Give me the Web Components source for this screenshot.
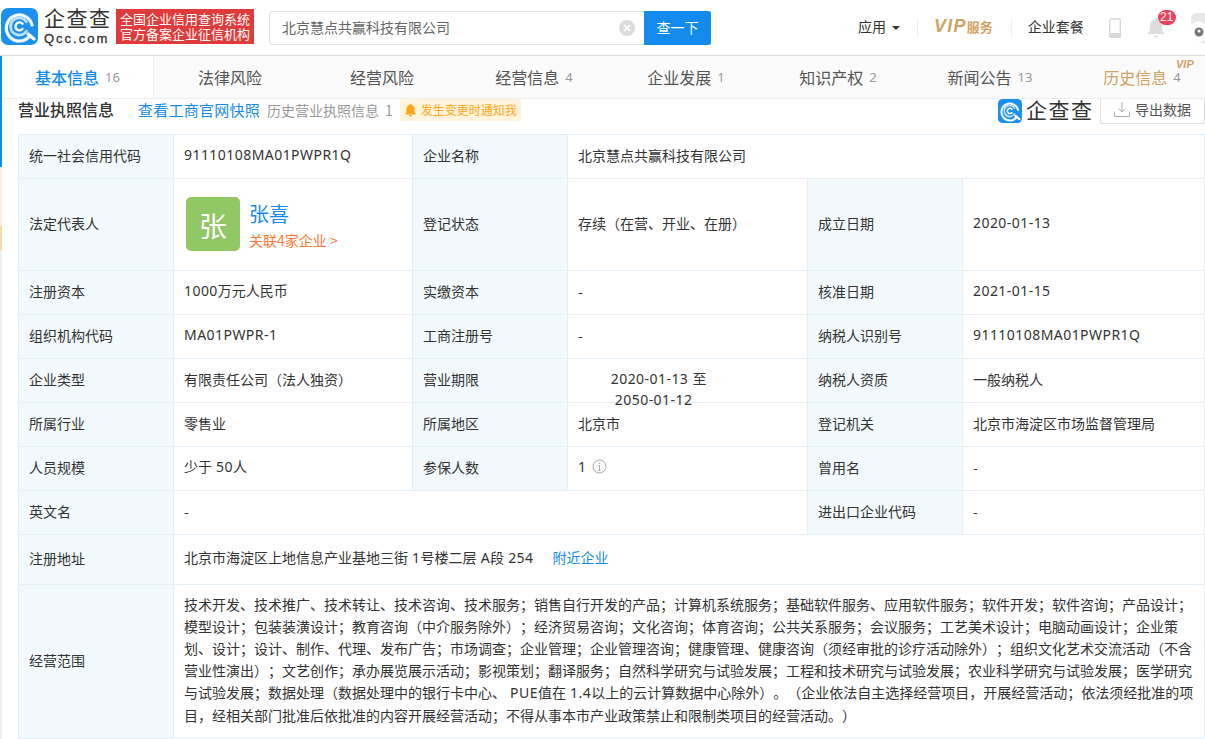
<!DOCTYPE html>
<html lang="zh">
<head>
<meta charset="utf-8">
<title>营业执照信息</title>
<style>
html,body{margin:0;padding:0;height:739px;overflow:hidden;background:#fff;}
body{font-family:"Noto Sans CJK SC","Liberation Sans",sans-serif;font-size:14px;color:#333;text-spacing-trim:space-all;}
</style>
</head>
<body>
<qcc-header></qcc-header>
<qcc-page>
    <qcc-tabs>
        <qcc-tab active count="16">基本信息</qcc-tab>
        <qcc-tab>法律风险</qcc-tab>
        <qcc-tab>经营风险</qcc-tab>
        <qcc-tab count="4">经营信息</qcc-tab>
        <qcc-tab count="1">企业发展</qcc-tab>
        <qcc-tab count="2">知识产权</qcc-tab>
        <qcc-tab count="13">新闻公告</qcc-tab>
        <qcc-tab gold count="4">历史信息</qcc-tab>
    </qcc-tabs>
    <qcc-section-head></qcc-section-head>
    <qcc-info-grid>
        <qcc-cell label>统一社会信用代码</qcc-cell>
        <qcc-cell><qcc-n>91110108MA01PWPR1Q</qcc-n></qcc-cell>
        <qcc-cell label>企业名称</qcc-cell>
        <qcc-cell span="3">北京慧点共赢科技有限公司</qcc-cell>

        <qcc-cell label>法定代表人</qcc-cell>
        <qcc-cell><qcc-person initial="张" name="张喜" link="关联4家企业 &gt;"></qcc-person></qcc-cell>
        <qcc-cell label>登记状态</qcc-cell>
        <qcc-cell>存续（在营、开业、在册）</qcc-cell>
        <qcc-cell label>成立日期</qcc-cell>
        <qcc-cell><qcc-n>2020-01-13</qcc-n></qcc-cell>

        <qcc-cell label>注册资本</qcc-cell>
        <qcc-cell><span><qcc-n>1000</qcc-n>万元人民币</span></qcc-cell>
        <qcc-cell label>实缴资本</qcc-cell>
        <qcc-cell>-</qcc-cell>
        <qcc-cell label>核准日期</qcc-cell>
        <qcc-cell><qcc-n>2021-01-15</qcc-n></qcc-cell>

        <qcc-cell label>组织机构代码</qcc-cell>
        <qcc-cell><qcc-n>MA01PWPR-1</qcc-n></qcc-cell>
        <qcc-cell label>工商注册号</qcc-cell>
        <qcc-cell>-</qcc-cell>
        <qcc-cell label>纳税人识别号</qcc-cell>
        <qcc-cell><qcc-n>91110108MA01PWPR1Q</qcc-n></qcc-cell>

        <qcc-cell label>企业类型</qcc-cell>
        <qcc-cell>有限责任公司（法人独资）</qcc-cell>
        <qcc-cell label>营业期限</qcc-cell>
        <qcc-cell><span style="white-space:pre"><qcc-n>2020-01-13 </qcc-n>至<qcc-n> 2050-01-12</qcc-n></span></qcc-cell>
        <qcc-cell label>纳税人资质</qcc-cell>
        <qcc-cell>一般纳税人</qcc-cell>

        <qcc-cell label>所属行业</qcc-cell>
        <qcc-cell>零售业</qcc-cell>
        <qcc-cell label>所属地区</qcc-cell>
        <qcc-cell>北京市</qcc-cell>
        <qcc-cell label>登记机关</qcc-cell>
        <qcc-cell>北京市海淀区市场监督管理局</qcc-cell>

        <qcc-cell label>人员规模</qcc-cell>
        <qcc-cell><span>少于<qcc-n>50</qcc-n>人</span></qcc-cell>
        <qcc-cell label>参保人数</qcc-cell>
        <qcc-cell><qcc-n>1</qcc-n><svg width="15" height="15" viewBox="0 0 15 15" style="margin-left:6px;flex:none"><circle cx="7.5" cy="7.5" r="6.5" fill="none" stroke="#aaa"/><path d="M7.5 6.5v5M6.3 11.5h2.4M6.5 6.5h1" fill="none" stroke="#aaa"/><circle cx="7.5" cy="4.2" r=".8" fill="#aaa"/></svg></qcc-cell>
        <qcc-cell label>曾用名</qcc-cell>
        <qcc-cell>-</qcc-cell>

        <qcc-cell label>英文名</qcc-cell>
        <qcc-cell span="3">-</qcc-cell>
        <qcc-cell label>进出口企业代码</qcc-cell>
        <qcc-cell>-</qcc-cell>

        <qcc-cell label>注册地址</qcc-cell>
        <qcc-cell span="5"><span>北京市海淀区上地信息产业基地三街<qcc-n>1</qcc-n>号楼二层<qcc-n>A</qcc-n>段<qcc-n>254</qcc-n><a style="color:#128bed;margin-left:19px">附近企业</a></span></qcc-cell>

        <qcc-cell label>经营范围</qcc-cell>
        <qcc-cell span="5"><div style="line-height:22px">技术开发、技术推广、技术转让、技术咨询、技术服务；销售自行开发的产品；计算机系统服务；基础软件服务、应用软件服务；软件开发；软件咨询；产品设计；模型设计；包装装潢设计；教育咨询（中介服务除外）；经济贸易咨询；文化咨询；体育咨询；公共关系服务；会议服务；工艺美术设计；电脑动画设计；企业策划、设计；设计、制作、代理、发布广告；市场调查；企业管理；企业管理咨询；健康管理、健康咨询（须经审批的诊疗活动除外）；组织文化艺术交流活动（不含营业性演出）；文艺创作；承办展览展示活动；影视策划；翻译服务；自然科学研究与试验发展；工程和技术研究与试验发展；农业科学研究与试验发展；医学研究与试验发展；数据处理（数据处理中的银行卡中心、<qcc-n>PUE</qcc-n>值在<qcc-n>1.4</qcc-n>以上的云计算数据中心除外）。（企业依法自主选择经营项目，开展经营活动；依法须经批准的项目，经相关部门批准后依批准的内容开展经营活动；不得从事本市产业政策禁止和限制类项目的经营活动。）</div></qcc-cell>
    </qcc-info-grid>
</qcc-page>

<script>
// latin runs: the reference's latin is a little wider than the CJK font's
class QccN extends HTMLElement{
    constructor(){
        super();
        this.attachShadow({mode:'open'}).innerHTML = `
        <style>:host{font-family:"Noto Sans",sans-serif;letter-spacing:.45px;}</style><slot></slot>`;
    }
}
customElements.define('qcc-n', QccN);

class QccMark extends HTMLElement{
    constructor(){
        super();
        const s = this.getAttribute('size') || 37;
        this.attachShadow({mode:'open'}).innerHTML = `
        <style>:host{display:block;flex:none;line-height:0;}</style>
        <svg width="${s}" height="${s}" viewBox="0 0 37 37">
            <rect width="37" height="37" rx="7" fill="#1c90ee"/>
            <g fill="none" stroke="#fff" stroke-linecap="round">
                <path d="M29 27.5A13 13 0 1 1 31 17" stroke-width="3.2" opacity=".95"/>
                <path d="M27 26l6 5" stroke-width="3.2"/>
                <path d="M25.5 14A8.6 8.6 0 1 0 25.5 23" stroke="#bfe0fb" stroke-width="2.6"/>
                <path d="M21.5 15.800A4 4 0 1 0 21.500 21" stroke-width="2.4"/>
            </g>
        </svg>`;
    }
}
customElements.define('qcc-mark', QccMark);

class QccHeader extends HTMLElement{
    constructor(){
        super();
        this.attachShadow({mode:'open'}).innerHTML = `
        <style>
        :host{display:block;height:55px;border-bottom:1px solid #ddd;background:#fff;overflow:hidden;}
        .bar{display:flex;align-items:flex-start;height:55px;width:1300px;padding-left:1px;box-sizing:border-box;}
        qcc-mark{margin-top:8px;}
        .brand{width:65px;margin:4px 0 0 6px;color:#333;}
        .brand b{display:block;font-weight:400;font-size:21px;line-height:26px;letter-spacing:1.500px;white-space:nowrap;}
        .brand i{display:block;font:400 13px/13px "Liberation Sans",sans-serif;font-style:normal;letter-spacing:2px;margin-top:2px;white-space:nowrap;-webkit-text-stroke:.3px #333;}
        .slogan{margin:9px 0 0 7px;width:138px;height:35px;background:#e03a3a;color:#fff;font-size:13px;line-height:15px;text-align:center;padding-top:1.500px;box-sizing:border-box;white-space:nowrap;}
        .search{display:flex;margin:11px 0 0 15px;height:34px;}
        .input{width:375px;box-sizing:border-box;border:1px solid #ddd;border-right:0;border-radius:4px 0 0 4px;display:flex;align-items:center;padding:0 9px 0 12px;color:#666;}
        .input span{flex:1;padding-bottom:2px;}
        .btn{width:67px;background:#128bed;color:#fff;border-radius:0 3px 3px 0;display:flex;align-items:center;justify-content:center;padding-bottom:2px;box-sizing:border-box;}
        .links{display:flex;align-items:center;height:55px;margin-left:147px;color:#333;white-space:nowrap;}
        .links>span{padding-bottom:3px;}
        .caret{width:0;height:0;border:4px solid transparent;border-top:4px solid #333;border-bottom:0;margin-left:6px;}
        .sep{width:1px;height:18px;background:#eee;}
        .vip{color:#d2a263;font-weight:700;font-size:13px;display:flex;align-items:center;}
        .vip em{font:italic 700 18px/20px "Liberation Sans",sans-serif;letter-spacing:1.200px;}
        .bell{position:relative;width:18px;height:20px;margin-left:26px;}
        .badge{position:absolute;left:11px;top:-8px;width:18px;height:15px;border-radius:8px;background:#f04058;color:#fff;font:12px/15px "Liberation Sans",sans-serif;text-align:center;}
        .face{width:40px;height:30px;margin-left:26px;border-radius:5px;background:#e8e8e8;position:relative;overflow:hidden;}
        </style>
        <div class="bar">
            <qcc-mark></qcc-mark>
            <div class="brand"><b>企查查</b><i>Qcc.com</i></div>
            <div class="slogan">全国企业信用查询系统<br>官方备案企业征信机构</div>
            <div class="search">
                <div class="input"><span>北京慧点共赢科技有限公司</span>
                    <svg width="16" height="16" viewBox="0 0 16 16"><circle cx="8" cy="8" r="8" fill="#dcdcdc"/><path d="M5 5l6 6M11 5l-6 6" stroke="#fff" stroke-width="1.600"/></svg>
                </div>
                <div class="btn">查一下</div>
            </div>
            <div class="links">
                <span>应用</span><i class="caret"></i>
                <i class="sep" style="margin-left:17px"></i>
                <span class="vip" style="margin-left:16px"><em>VIP</em>服务</span>
                <i class="sep" style="margin-left:18px"></i>
                <span style="margin-left:16px">企业套餐</span>
                <svg style="margin-left:25px" width="12" height="20" viewBox="0 0 12 20"><rect x=".7" y=".7" width="10.600" height="18.600" rx="2" fill="none" stroke="#d8d8d8" stroke-width="1.400"/><rect x="0" y="15" width="12" height="5" rx="2" fill="#d8d8d8"/></svg>
                <div class="bell">
                    <svg width="18" height="20" viewBox="0 0 18 20"><path d="M9 0c1 0 1.500.7 1.500 1.500C13.500 2.300 15 5 15 8v4l2.500 4H.5L3 12V8c0-3 1.500-5.700 4.500-6.500C7.500.7 8 0 9 0z" fill="#dcdcdc"/><path d="M6.500 17.500h5L9 20z" fill="#dcdcdc"/></svg>
                    <span class="badge">21</span>
                </div>
                <div class="face">
                    <svg width="40" height="30" viewBox="0 0 40 30"><path d="M0 12C6 6 14 8 16 15s-2 13-8 15H0z" fill="#fff"/><circle cx="8" cy="19" r="4.500" fill="#777"/><circle cx="8" cy="18" r="1.500" fill="#fff"/></svg>
                </div>
            </div>
        </div>`;
    }
}
customElements.define('qcc-header', QccHeader);

// left rail + main column under the header
class QccPage extends HTMLElement{
    constructor(){
        super();
        this.attachShadow({mode:'open'}).innerHTML = `
        <style>
        :host{display:flex;height:683px;overflow:hidden;}
        .rail{width:2px;flex:none;display:flex;flex-direction:column;background:#eee;}
        .rail i{display:block;}
        .main{flex:1;min-width:0;}
        </style>
        <div class="rail">
            <i style="height:111px;background:#128bed"></i>
            <i style="height:59px;background:#fdeedd"></i>
            <i style="height:24px;background:#fdd9a0"></i>
        </div>
        <div class="main"><slot></slot></div>`;
    }
}
customElements.define('qcc-page', QccPage);

class QccTabs extends HTMLElement{
    constructor(){
        super();
        this.attachShadow({mode:'open'}).innerHTML = `
        <style>
        :host{display:flex;height:42px;background:#fafafa;border-bottom:1px solid #eee;overflow:hidden;}
        </style>
        <slot></slot>`;
    }
}
customElements.define('qcc-tabs', QccTabs);

class QccTab extends HTMLElement{
    constructor(){
        super();
        const count = this.getAttribute('count');
        const gold = this.hasAttribute('gold');
        this.attachShadow({mode:'open'}).innerHTML = `
        <style>
        :host{flex:none;width:152px;height:42px;position:relative;display:flex;align-items:center;justify-content:center;font-size:16px;color:#555;box-sizing:border-box;white-space:nowrap;}
        :host([active]){background:#fff;color:#128bed;font-weight:500;border-right:1px solid #eee;}
        :host([gold]){color:#d2a263;}
        .n{font:400 13px/18px "Noto Sans",sans-serif;color:#999;margin-left:6px;}
        .vip{position:absolute;left:110px;top:3px;font:italic 700 11px/11px "Liberation Sans",sans-serif;color:#d2a263;}
        </style>
        <slot></slot>${count ? `<span class="n">${count}</span>` : ''}${gold ? '<span class="vip">VIP</span>' : ''}`;
    }
}
customElements.define('qcc-tab', QccTab);

class QccSectionHead extends HTMLElement{
    constructor(){
        super();
        this.attachShadow({mode:'open'}).innerHTML = `
        <style>
        :host{display:flex;align-items:flex-start;height:35px;padding-left:16px;line-height:22px;white-space:nowrap;}
        h3{margin:-1px 0 0;font-size:16px;font-weight:500;color:#333;}
        .snap{color:#128bed;font-size:15px;letter-spacing:.25px;margin-left:24px;}
        .hist{color:#999;margin-left:7px;}
        .hist span{margin-left:6px;}
        .notify{display:flex;align-items:center;margin-left:7px;width:121px;height:22px;box-sizing:border-box;padding-left:5px;background:#fff3dc;border-radius:3px;color:#ffa516;font-size:12px;}
        .notify svg{margin-right:5px;}
        .right{margin-left:auto;display:flex;}
        .brand{font-size:21px;line-height:20px;letter-spacing:1.500px;color:#333;margin-left:4px;width:74px;}
        .export{width:105px;height:25px;box-sizing:border-box;border:1px solid #ddd;border-top:0;border-radius:0 0 2px 2px;display:flex;align-items:center;padding:0 0 5px 13px;color:#555;}
        .export svg{margin-right:5px;}
        </style>
        <h3>营业执照信息</h3>
        <a class="snap">查看工商官网快照</a>
        <span class="hist">历史营业执照信息<span>1</span></span>
        <div class="notify">
            <svg width="11" height="13" viewBox="0 0 11 13"><path d="M5.500 0c.7 0 1 .4 1 .9C8.500 1.400 9.500 3 9.500 5v3l1.500 2.500H0L1.500 8V5c0-2 1-3.600 3-4.100 0-.5.300-.9 1-.9z" fill="#ffa516"/><path d="M3.800 11h3.400L5.500 13z" fill="#ffa516"/></svg>
            发生变更时通知我
        </div>
        <div class="right">
            <qcc-mark size="24"></qcc-mark>
            <span class="brand">企查查</span>
            <div class="export">
                <svg width="16" height="16" viewBox="0 0 16 16" fill="none" stroke="#aaa"><path d="M8 1v10M4.500 7.500L8 11l3.500-3.500M.5 10.500v5h15v-5"/></svg>
                导出数据
            </div>
        </div>`;
    }
}
customElements.define('qcc-section-head', QccSectionHead);

class QccInfoGrid extends HTMLElement{
    constructor(){
        super();
        this.attachShadow({mode:'open'}).innerHTML = `
        <style>
        :host{display:block;margin-left:16px;}
        .grid{display:grid;
            grid-template-columns:155px 239px 155px 240px 155px 242px;
            grid-template-rows:44px 92px 44px 44px 44px 44px 44px 44px 50px 154px;
            border-top:1px solid #e4eef6;border-left:1px solid #e4eef6;width:1187px;box-sizing:border-box;}
        </style>
        <div class="grid"><slot></slot></div>`;
    }
}
customElements.define('qcc-info-grid', QccInfoGrid);

class QccCell extends HTMLElement{
    constructor(){
        super();
        this.attachShadow({mode:'open'}).innerHTML = `
        <style>
        :host{display:flex;align-items:center;box-sizing:border-box;padding:0 10px 4px;border-right:1px solid #e4eef6;border-bottom:1px solid #e4eef6;color:#333;line-height:20px;min-width:0;}
        :host([label]){background:#f2f9fc;}
        :host([span="3"]){grid-column:span 3;}
        :host([span="5"]){grid-column:span 5;}
        </style>
        <slot></slot>`;
    }
}
customElements.define('qcc-cell', QccCell);

class QccPerson extends HTMLElement{
    constructor(){
        super();
        this.attachShadow({mode:'open'}).innerHTML = `
        <style>
        :host{display:flex;align-items:center;margin:2px 0 0 2px;}
        .pic{width:54px;height:54px;border-radius:5px;background:#92c765;color:#fff;font-size:28px;display:flex;align-items:center;justify-content:center;margin-right:9px;box-sizing:border-box;padding-top:3px;}
        .txt{padding-top:3px;}
        .name{font-size:20px;line-height:26px;color:#128bed;}
        .link{font-size:14px;line-height:20px;color:#ff7733;margin-top:3px;white-space:pre;}
        </style>
        <div class="pic">${this.getAttribute('initial')}</div>
        <div class="txt">
            <div class="name">${this.getAttribute('name')}</div>
            <div class="link">${this.getAttribute('link').replace('>','&gt;')}</div>
        </div>`;
    }
}
customElements.define('qcc-person', QccPerson);
</script>
</body>
</html>
